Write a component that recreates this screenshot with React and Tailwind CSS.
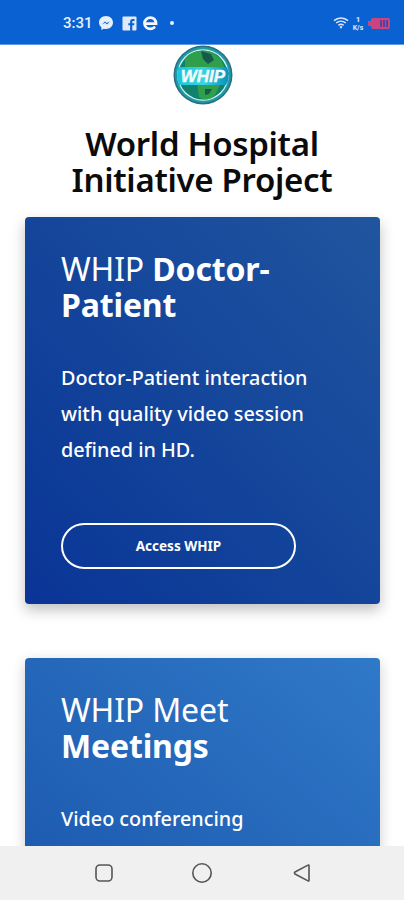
import React from "react";

const font = { fontFamily: '"Noto Sans", sans-serif' };

function StatusBar() {
  return (
    <div className="h-[45px] shrink-0 bg-[#0a62d2] border-b border-[#5f9be6] flex items-center justify-between pl-[63px] pr-[14px] pt-[2px] text-white">
      <div className="flex items-center">
        <span className="text-[15px] font-medium leading-none text-[#e8f0fb] font-['Roboto',sans-serif]">3:31</span>
        <svg width="16" height="16" viewBox="0 0 16 16" className="ml-[5px]">
          <path d="M8 1C4 1 1 3.900 1 7.500c0 2 .9 3.600 2.400 4.800V15l2.400-1.300c.7.2 1.400.3 2.200.3 4 0 7-2.900 7-6.500S12 1 8 1z" fill="#e8f0fb" />
          <path d="M4 9.500l3-3 1.800 1.600L12 6.300 9 9.400 7.200 7.800z" fill="#0a62d2" />
        </svg>
        <svg width="15" height="15" viewBox="0 0 15 15" className="ml-[8px]">
          <rect x="0.5" y="0.5" width="14" height="14" rx="1" fill="#dfe9f8" />
          <path d="M10.300 15V9.300h1.800l.3-2.100h-2.100V6c0-.6.2-1 1-1h1.200V3.100c-.3 0-1-.1-1.700-.1-1.600 0-2.700 1-2.700 2.800v1.400H6.300v2.100h1.800V15z" fill="#0a62d2" />
        </svg>
        <svg width="18" height="18" viewBox="0 0 18 18" className="ml-[4px]">
          <path d="M4 9.600h11c0-3.600-2.400-6-5.600-6C6.200 3.600 3.500 6 3.500 9.200c0 3.200 2.500 5.600 5.900 5.600 1.500 0 2.700-.4 3.800-1.300" fill="none" stroke="#f4f8fd" strokeWidth="2.800" strokeLinecap="round" />
          <path d="M6.500 7.300h6" stroke="#0a62d2" strokeWidth="1" />
        </svg>
        <span className="ml-[11px] w-[4px] h-[4px] rounded-full bg-[#e8f0fb]" />
      </div>
      <div className="flex items-center">
        <svg width="16" height="14" viewBox="0 0 16 14">
          <path d="M1 4.600C5 1 11 1 15 4.600M3.200 7C6 4.600 10 4.600 12.800 7M5.400 9.300C7 8 9 8 10.600 9.300" fill="none" stroke="#dce8f9" strokeWidth="1.500" />
          <path d="M6.600 11 8 9.600 9.400 11 8 12.800z" fill="#dce8f9" />
        </svg>
        <div className="ml-[2px] w-[14px] flex flex-col items-center text-[#dce8f9] font-bold leading-none font-['Roboto',sans-serif]">
          <span className="text-[8px] leading-[9px]">1</span>
          <span className="text-[7px] leading-[8px]">K/s</span>
        </div>
        <div className="ml-[3px] flex items-center">
          <span className="w-[3px] h-[5px] bg-[#c9457f]" />
          <div className="w-[19px] h-[11px] rounded-[2px] bg-[#c9457f] flex items-center justify-end gap-[1px] pr-[2px]">
            <span className="w-[2px] h-[7px] bg-[#5a3f9e]" />
            <span className="w-[2px] h-[7px] bg-[#5a3f9e]" />
            <span className="w-[2px] h-[7px] bg-[#5a3f9e]" />
          </div>
        </div>
      </div>
    </div>
  );
}

function Logo() {
  return (
    <svg width="60" height="60" viewBox="0 0 60 60" className="block">
      <defs>
        <clipPath id="globe"><circle cx="30" cy="30" r="24.5" /></clipPath>
        <linearGradient id="band" x1="0" x2="1" y1="0" y2="0">
          <stop offset="0" stopColor="#1cc3dc" />
          <stop offset="0.5" stopColor="#37d4e4" />
          <stop offset="1" stopColor="#0c8fb8" />
        </linearGradient>
      </defs>
      <circle cx="30" cy="30" r="29.500" fill="#2c6e80" />
      <circle cx="30" cy="30" r="28" fill="#1b9ca6" />
      <circle cx="30" cy="30" r="25.800" fill="#d8f2f2" />
      <g clipPath="url(#globe)">
        <rect x="0" y="0" width="60" height="60" fill="#11806e" />
        <path d="M12 5h24l12 9 4 10H12zM24 38h24l-6 12-8 7-8-5z" fill="#2f9f4c" />
        <path d="M28 6l10 3 3 6-6 4-5-5zM32 44h7l-3 5-4 1z" fill="#155a4d" />
      </g>
      <path d="M5 22h49l2 6-1 8-2 4H6l-2-8z" fill="url(#band)" />
      <text x="30" y="36.500" textAnchor="middle" fontFamily="Liberation Sans, sans-serif" fontSize="17" fontWeight="700" fontStyle="italic" fill="#f2fdfb" stroke="#f2fdfb" strokeWidth="0.4">WHIP</text>
    </svg>
  );
}

function Card({ gradient, light, bold, lines, button, shadow }) {
  return (
    <div className={`ml-[25px] mr-[24px] rounded-[4px] pl-[36px] pr-[20px] pt-[34px] shrink-0 text-white ${gradient} ${shadow}`}>
      <h2 className="text-[32px] leading-[36px] tracking-[-0.15px] font-normal">
        {light} <b className="font-bold">{bold}</b>
      </h2>
      <p className="mt-[37px] text-[19.8px] leading-[36px] font-medium">
        {lines.map((l) => (
          <span key={l} className="block whitespace-nowrap">{l}</span>
        ))}
      </p>
      {button && (
        <div className="mt-[55px] pb-[35px]">
          <div className="w-[235px] h-[46px] rounded-full border-2 border-white flex items-center justify-center text-[13.5px] font-bold">
            Access WHIP
          </div>
        </div>
      )}
    </div>
  );
}

function NavBar() {
  return (
    <div className="h-[54px] shrink-0 bg-[#f0f0f0] flex items-center justify-center pb-[1px] pl-[1px]">
      <svg width="20" height="20" viewBox="0 0 20 20">
        <rect x="2" y="2" width="16" height="16" rx="4" fill="none" stroke="#555" strokeWidth="1.600" />
      </svg>
      <svg width="22" height="22" viewBox="0 0 22 22" className="ml-[77px]">
        <circle cx="11" cy="11" r="9.200" fill="none" stroke="#555" strokeWidth="1.600" />
      </svg>
      <svg width="20" height="20" viewBox="0 0 20 20" className="ml-[79px]">
        <path d="M17 2.600v14.800c0 .6-.5.8-1 .5L3 11c-.7-.4-.7-1.600 0-2L16 2.100c.5-.3 1 0 1 .5z" fill="none" stroke="#555" strokeWidth="1.600" strokeLinejoin="round" />
      </svg>
    </div>
  );
}

export default function App() {
  return (
    <div className="w-[404px] h-[900px] bg-white flex flex-col overflow-hidden" style={font}>
      <StatusBar />
      <main className="flex-1 min-h-0 overflow-hidden flex flex-col">
        <div className="flex justify-center shrink-0 pl-[1px]">
          <Logo />
        </div>
        <h1 className="mt-[21px] text-center text-[33px] leading-[36px] font-semibold text-[#0b0b0b] tracking-[-0.3px] shrink-0">
          World Hospital<br />Initiative Project
        </h1>
        <div className="mt-[19px] flex flex-col gap-[54px]">
          <Card
            gradient="bg-gradient-to-tr from-[#0a3496] to-[#20559f]"
            shadow="shadow-[0_6px_14px_rgba(0,0,0,0.25)]"
            light="WHIP"
            bold="Doctor-Patient"
            lines={["Doctor-Patient interaction", "with quality video session", "defined in HD."]}
            button
          />
          <Card
            gradient="h-[300px] bg-gradient-to-tr from-[#1a55ab] to-[#3079c8]"
            shadow="shadow-[0_4px_14px_rgba(0,0,0,0.2)]"
            light="WHIP Meet"
            bold="Meetings"
            lines={["Video conferencing"]}
          />
        </div>
      </main>
      <NavBar />
    </div>
  );
}
